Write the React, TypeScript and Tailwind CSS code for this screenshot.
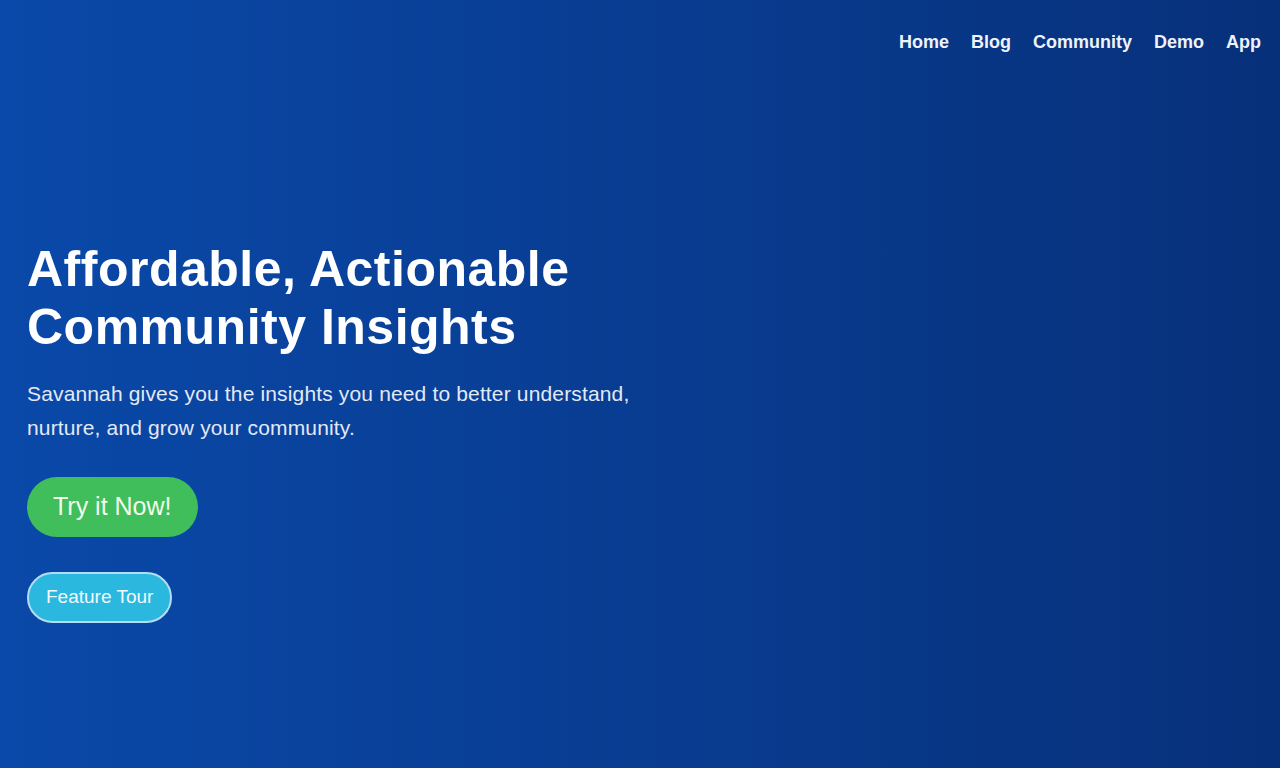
export default function App() {
  const links = ["Home", "Blog", "Community", "Demo", "App"];

  return (
    <div
      className="min-h-screen w-full bg-gradient-to-r from-[#0a49a9] to-[#07307a] text-white"
      style={{ fontFamily: '"Liberation Sans", Arial, sans-serif' }}
    >
      <header className="flex justify-end gap-[22px] pt-[28px] pr-[19px]">
        {links.map((l) => (
          <a key={l} href="#" className="text-[18px] font-bold leading-[28px] text-[#eef2fa]">
            {l}
          </a>
        ))}
      </header>

      <main className="px-[27px] mt-[184px]">
        <h1 className="text-[50px] font-bold leading-[58px] tracking-[0.5px] text-white">
          Affordable, Actionable
          <br />
          Community Insights
        </h1>
        <p className="mt-[21px] max-w-[640px] text-[21px] leading-[34px] tracking-[0.15px] text-[#e3e9f5]">
          Savannah gives you the insights you need to better understand, nurture, and grow your
          community.
        </p>

        <div className="mt-[32px] flex flex-col items-start gap-[35px]">
          <button className="h-[60px] rounded-full bg-[#3fbe5b] px-[26px] text-[25px] text-[#f3fbea]">
            Try it Now!
          </button>
          <button className="h-[51px] rounded-full border-2 border-[#b4dcf3] bg-[#2bb8de] px-[17px] text-[19px] text-[#f2f9fd]">
            Feature Tour
          </button>
        </div>
      </main>
    </div>
  );
}
